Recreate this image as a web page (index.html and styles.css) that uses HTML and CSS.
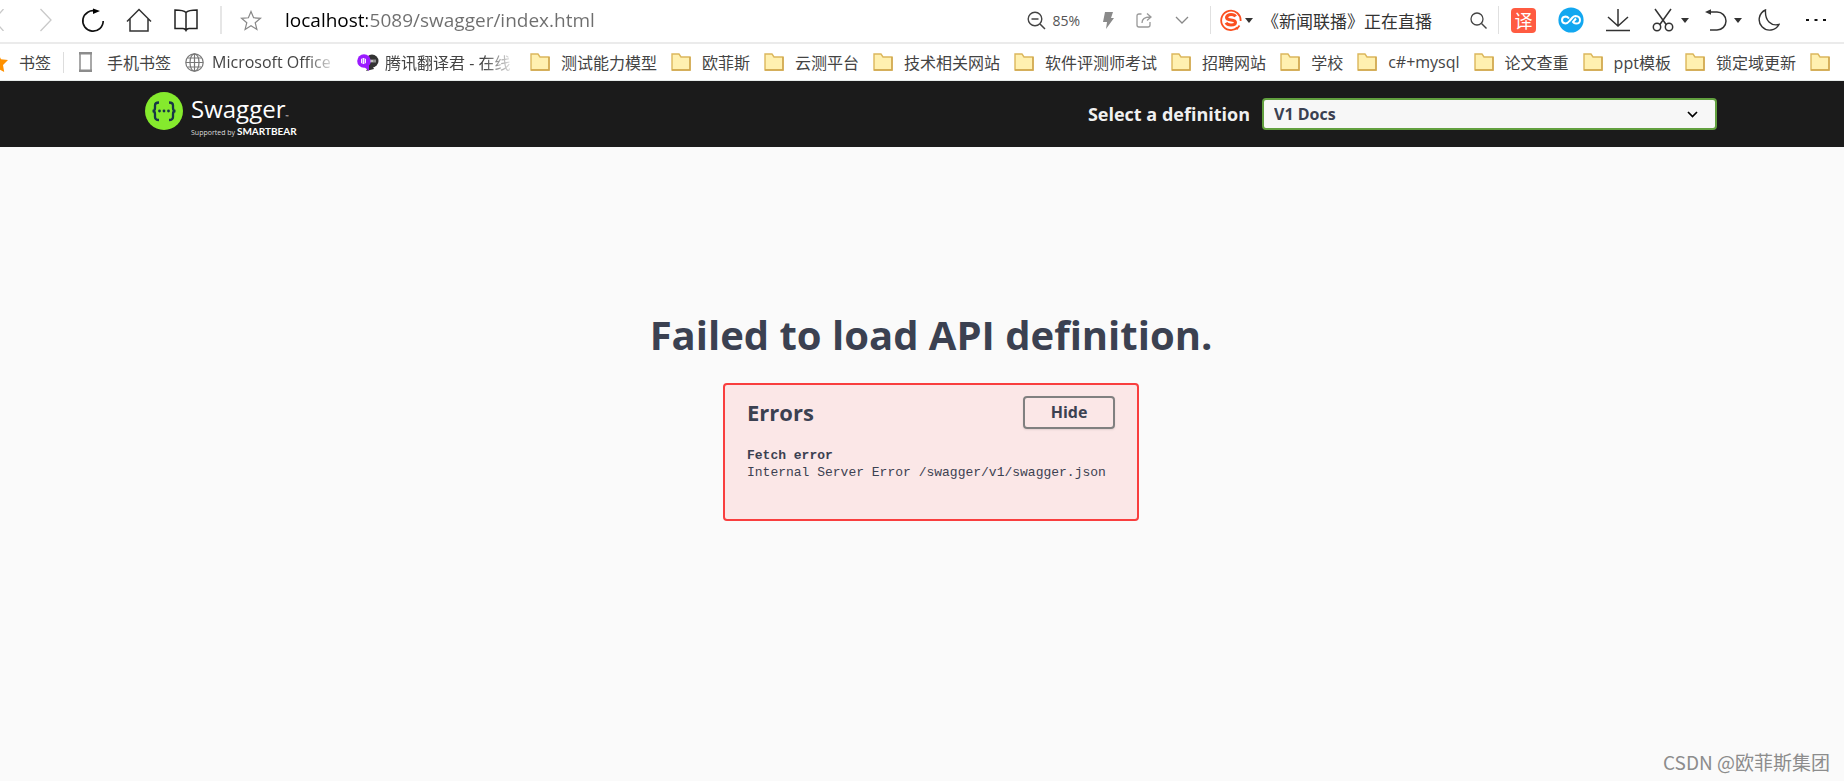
FILE: index.html
```html
<!DOCTYPE html>
<html lang="zh-CN">
<head>
<meta charset="utf-8">
<title>Swagger UI</title>
<link rel="stylesheet" href="styles.css">
</head>
<body>
<svg class="defs" aria-hidden="true">
  <symbol id="folder" viewBox="0 0 20 18"><path d="M1 1h7l2 3h9v13H1z" fill="#fff0b0" stroke="#dcb75c" stroke-width="1.4"/><path d="M19 4v13H1" fill="none" stroke="#cfa64e" stroke-width="1.4"/></symbol>
  <symbol id="caret" viewBox="0 0 8 5"><path d="M0 0h8L4 5z" fill="#333"/></symbol>
</svg>
<nav class="toolbar">
  <div class="nav-buttons">
    <button class="icon-btn back" aria-label="后退"><svg width="10" height="22" viewBox="0 0 10 22"><path d="M9.500 0 0 11l9.500 11" fill="none" stroke="#c9c9c9" stroke-width="1.300"/></svg></button>
    <button class="icon-btn forward" aria-label="前进"><svg width="12" height="24" viewBox="0 0 12 24"><path d="m.5 1 10.500 11L.5 23" fill="none" stroke="#c9c9c9" stroke-width="1.300"/></svg></button>
    <button class="icon-btn refresh" aria-label="刷新"><svg width="24" height="25" viewBox="0 0 24 25"><path d="M15 3.200A10.200 10.200 0 1 0 22.200 13" fill="none" stroke="#111" stroke-width="1.700"/><path d="m12 .5 7 2.500-7 3z" fill="#000"/></svg></button>
    <button class="icon-btn home" aria-label="主页"><svg width="26" height="24" viewBox="0 0 26 24"><path d="m1 13.500 12-12 12 12M4 11v12h18V11" fill="none" stroke="#333" stroke-width="1.500"/></svg></button>
    <button class="icon-btn book" aria-label="阅读"><svg width="24" height="23" viewBox="0 0 24 23"><path d="M12 3.500C10 1.500 7 1 1 1v18.500h8q2 0 3 2 1-2 3-2h8V1c-6 0-9 .5-11 2.500v17" fill="none" stroke="#222" stroke-width="1.500"/></svg></button>
    <span class="divider"></span>
    <button class="icon-btn favorite" aria-label="收藏"><svg width="22" height="21" viewBox="0 0 22 21"><path d="m11 1.500 2.600 6.300 6.900.5-5.300 4.400 1.700 6.700-5.900-3.700-5.900 3.700 1.700-6.700L1.500 8.300l6.900-.5z" fill="none" stroke="#888" stroke-width="1.200"/></svg></button>
  </div>
  <input class="address" aria-label="地址" value="localhost:5089/swagger/index.html">
  <div class="page-tools">
    <button class="icon-btn zoom"><svg width="19" height="19" viewBox="0 0 19 19"><circle cx="8" cy="8" r="6.800" fill="none" stroke="#444" stroke-width="1.400"/><path d="M4.500 8h7M13 13l5 5" stroke="#444" stroke-width="1.500"/></svg><span>85%</span></button>
    <button class="icon-btn" aria-label="加速"><svg width="12" height="17" viewBox="0 0 12 17"><path d="M3 0h8L9 6h3L4 17l1-7H1z" fill="#8a8a8a"/></svg></button>
    <button class="icon-btn" aria-label="分享"><svg width="17" height="16" viewBox="0 0 17 16"><path d="M5.500 2H3Q1 2 1 4v9q0 2 2 2h9q2 0 2-2v-3M6 11q0-6 8-6M11 1.500 15 5l-4 3.500" fill="none" stroke="#999" stroke-width="1.300"/></svg></button>
    <button class="icon-btn" aria-label="展开"><svg width="14" height="8" viewBox="0 0 14 8"><path d="m1 1 6 6 6-6" fill="none" stroke="#888" stroke-width="1.300"/></svg></button>
  </div>
  <form class="search">
    <button type="button" class="icon-btn engine" aria-label="搜索引擎"><svg width="22" height="22" viewBox="0 0 22 22"><path d="M17.500 18.500A9.700 9.700 0 1 1 20.600 12M16.500 20.500l3-4" fill="none" stroke="#fb5021" stroke-width="1.800"/><path d="M15.500 7.500Q14.500 5.500 11 5.500T6.500 8.200Q6.500 10.500 11 10.900t4.500 2.600Q15.500 16 11 16q-3.800 0-5-2.200" fill="none" stroke="#fb5021" stroke-width="3"/></svg><svg width="8" height="5"><use href="#caret"/></svg></button>
    <input class="query" aria-label="搜索" value="《新闻联播》正在直播">
    <button type="button" class="icon-btn" aria-label="搜索"><svg width="17" height="17" viewBox="0 0 17 17"><circle cx="7" cy="7" r="6" fill="none" stroke="#444" stroke-width="1.300"/><path d="m11.500 11.500 5 5" stroke="#444" stroke-width="1.400"/></svg></button>
  </form>
  <div class="extensions">
    <button class="icon-btn translate">译</button>
    <button class="icon-btn" aria-label="网盘"><svg width="26" height="26" viewBox="0 0 26 26"><circle cx="13" cy="13" r="12.600" fill="#12a7f0"/><path d="M11 11.500Q9.500 9.500 7.500 9.500 4 9.700 4 13t3.500 3.500q2 0 4-2.500l3-3.500q1.500-1.500 3-1.500 4.500.3 4.500 4t-4 3.500q-2 0-3-1.500l3-3.500" fill="none" stroke="#fff" stroke-width="2"/></svg></button>
    <button class="icon-btn" aria-label="下载"><svg width="24" height="23" viewBox="0 0 24 23"><path d="M12 0v17M2 8l10 9 10-9M0 21.500h24" fill="none" stroke="#333" stroke-width="1.500"/></svg></button>
    <button class="icon-btn with-caret" aria-label="截图"><svg width="22" height="24" viewBox="0 0 22 24"><path d="m3 1 11.500 16M19 1 7.500 17" stroke="#333" stroke-width="1.500"/><circle cx="5" cy="19" r="3.700" fill="none" stroke="#333" stroke-width="1.500"/><circle cx="17" cy="19" r="3.700" fill="none" stroke="#333" stroke-width="1.500"/></svg><svg width="8" height="5"><use href="#caret"/></svg></button>
    <button class="icon-btn with-caret" aria-label="恢复"><svg width="22" height="22" viewBox="0 0 22 22"><path d="M3 3h9a9 9 0 0 1 0 18H5" fill="none" stroke="#333" stroke-width="1.500"/><path d="m0 3 6-2.800v5.600z" fill="#333"/></svg><svg width="8" height="5"><use href="#caret"/></svg></button>
    <button class="icon-btn" aria-label="夜间模式"><svg width="22" height="22" viewBox="0 0 22 22"><path d="M7.500 1A10.500 10.500 0 1 0 21 15.500Q15 17 11 13T7.500 1z" fill="none" stroke="#333" stroke-width="1.400"/></svg></button>
    <button class="icon-btn more" aria-label="更多"><svg width="20" height="4" viewBox="0 0 20 4"><path d="M0 1h3v2H0zM8.500 1h3v2h-3zM17 1h3v2h-3z" fill="#111"/></svg></button>
  </div>
</nav>
<nav class="bookmarks">
  <a class="bookmark starred" href="#"><svg width="20" height="19" viewBox="0 0 20 19"><path d="m10 0 3 6.300 7 .7-5 5 1.200 7L10 15.500 3.800 19 5 12 0 7l7-.7z" fill="#ff9100"/></svg>书签</a>
  <span class="separator"></span>
  <a class="bookmark phone" href="#"><svg width="13" height="20" viewBox="0 0 13 20"><path d="M1 1h11v18H1z" fill="#fff" stroke="#8c8c8c" stroke-width="1.500"/><path d="M0 0h13v2.500H0zM0 17.500h13V20H0z" fill="#8c8c8c"/></svg>手机书签</a>
  <a class="bookmark office" href="#"><svg width="19" height="19" viewBox="0 0 19 19"><g fill="none" stroke="#777" stroke-width="1.200"><circle cx="9.500" cy="9.500" r="8.700"/><ellipse cx="9.500" cy="9.500" rx="4.500" ry="8.700"/><path d="M9.500 1v17M1 9.500h17M2.500 5h14M2.500 14h14"/></g></svg><span class="fade">Microsoft Office</span></a>
  <a class="bookmark tencent" href="#"><svg width="22" height="17" viewBox="0 0 22 17"><circle cx="15" cy="7" r="6.500" fill="#333"/><path d="m9 17 8-2-3-6z" fill="#333"/><circle cx="7" cy="7" r="6.800" fill="#9b1bff"/><path d="m6 12 6 5V9z" fill="#9b1bff"/><path d="M4.500 5h4v4h-4zM4 7h5M6.500 4v6M14 5.500v3m0-1.500h2m0-1.500v3m2-3v3" fill="none" stroke="#fff" stroke-width=".9"/></svg><span class="fade">腾讯翻译君 - 在线</span></a>
  <a class="bookmark" href="#"><svg width="20" height="18"><use href="#folder"/></svg>测试能力模型</a>
  <a class="bookmark" href="#"><svg width="20" height="18"><use href="#folder"/></svg>欧菲斯</a>
  <a class="bookmark" href="#"><svg width="20" height="18"><use href="#folder"/></svg>云测平台</a>
  <a class="bookmark" href="#"><svg width="20" height="18"><use href="#folder"/></svg>技术相关网站</a>
  <a class="bookmark" href="#"><svg width="20" height="18"><use href="#folder"/></svg>软件评测师考试</a>
  <a class="bookmark" href="#"><svg width="20" height="18"><use href="#folder"/></svg>招聘网站</a>
  <a class="bookmark" href="#"><svg width="20" height="18"><use href="#folder"/></svg>学校</a>
  <a class="bookmark" href="#"><svg width="20" height="18"><use href="#folder"/></svg>c#+mysql</a>
  <a class="bookmark" href="#"><svg width="20" height="18"><use href="#folder"/></svg>论文查重</a>
  <a class="bookmark" href="#"><svg width="20" height="18"><use href="#folder"/></svg>ppt模板</a>
  <a class="bookmark" href="#"><svg width="20" height="18"><use href="#folder"/></svg>锁定域更新</a>
  <a class="bookmark" href="#" aria-label="更多书签"><svg width="20" height="18"><use href="#folder"/></svg></a>
</nav>
<header class="topbar">
  <div class="wrapper">
    <a class="logo" href="#">
      <svg width="38" height="38" viewBox="0 0 38 38"><circle cx="19" cy="19" r="19" fill="#85ea2d"/><g fill="none" stroke="#173647" stroke-width="2.300"><path d="M14 10.500q-4 0-4 3v2.500q0 3-2.500 3 2.500 0 2.500 3V25q0 3 4 3M24 10.500q4 0 4 3v2.500q0 3 2.500 3-2.500 0-2.500 3V25q0 3-4 3"/></g><g fill="#173647"><circle cx="14.500" cy="19" r="1.400"/><circle cx="19" cy="19" r="1.400"/><circle cx="23.500" cy="19" r="1.400"/></g></svg>
      <span class="logo-text"><span class="brand">Swagger<small>™</small></span><span class="support">Supported by <b>SMARTBEAR</b></span></span>
    </a>
    <div class="definition">
      <label for="spec">Select a definition</label>
      <select id="spec"><option>V1 Docs</option></select>
    </div>
  </div>
</header>
<main class="content">
  <h1>Failed to load API definition.</h1>
  <section class="errors">
    <div class="errors-head"><h2>Errors</h2><button class="hide">Hide</button></div>
    <div class="error"><strong>Fetch error</strong><span>Internal Server Error /swagger/v1/swagger.json</span></div>
  </section>
</main>
<footer class="credit">CSDN @欧菲斯集团</footer>
</body>
</html>
```
FILE: styles.css
```css
* { box-sizing: border-box; }
body {
  margin: 0;
  min-height: 100vh;
  display: flex;
  flex-direction: column;
  overflow-x: hidden;
  background: #fafafa;
  color: #3b4151;
  font-family: "Open Sans", "Noto Sans CJK SC", sans-serif;
}
svg { display: block; flex: none; }
.defs { position: absolute; width: 0; height: 0; }
button, input, select { font-family: inherit; }
.icon-btn {
  display: flex;
  flex: none;
  align-items: center;
  padding: 0;
  border: 0;
  background: none;
  color: #555;
}
.toolbar {
  display: flex;
  align-items: center;
  height: 44px;
  padding: 0 18px 2px 0;
  border-bottom: 2px solid #ebebeb;
  background: #fff;
}
.nav-buttons { display: flex; align-items: center; flex: none; }
.back { margin-left: -6px; }
.forward { margin-left: 36px; }
.refresh { margin-left: 29px; }
.home { margin-left: 21px; }
.book { margin-left: 22px; }
.favorite { margin-left: 18px; }
.divider { width: 2px; height: 28px; margin-left: 22px; background: #e6e6e6; }
.address {
  flex: 1;
  min-width: 0;
  margin-left: 23px;
  padding: 0;
  border: 0;
  font-size: 19px;
  color: transparent;
  background: linear-gradient(90deg, #000 82px, #6e6e6e 82px) text;
}
.page-tools { display: flex; align-items: center; gap: 22px; padding-right: 21px; }
.zoom { gap: 6px; font-size: 14px; }
.search {
  display: flex;
  align-items: center;
  height: 28px;
  padding: 0 11px 0 9px;
  border: 1px solid #e0e0e0;
  border-width: 0 1px;
}
.engine { gap: 3px; }
.query { width: 217px; padding: 0 0 0 9px; border: 0; background: none; color: #333; font-size: 17px; }
.extensions { display: flex; align-items: center; gap: 22px; padding-left: 12px; }
.translate {
  justify-content: center;
  width: 25px;
  height: 25px;
  border-radius: 4px;
  background: #ff5b41;
  color: #fff;
  font-size: 18px;
}
.with-caret { gap: 7px; margin-right: -6px; }
.more { margin-left: 4px; }
.bookmarks {
  display: flex;
  align-items: center;
  gap: 14px;
  height: 37px;
  overflow: hidden;
  border-bottom: 1px solid #e8eceb;
  background: #fff;
}
.bookmark {
  display: flex;
  flex: none;
  align-items: center;
  gap: 11px;
  color: #444;
  font-size: 16px;
  white-space: nowrap;
  text-decoration: none;
}
.starred { margin-left: -12px; }
.separator { width: 1px; height: 21px; margin: 0 1px 0 -2px; background: #ddd; }
.phone { gap: 15px; }
.office { gap: 8px; }
.tencent { gap: 6px; margin-left: 6px; }
.fade {
  width: 125px;
  overflow: hidden;
  mask-image: linear-gradient(90deg, #000 75%, transparent);
}
.tencent .fade { width: 131px; }
.topbar { padding: 0 127px 0 145px; background: #1b1b1b; }
.wrapper { display: flex; align-items: center; justify-content: space-between; height: 66px; }
.logo { display: flex; align-items: center; gap: 8px; color: #fff; text-decoration: none; }
.logo > svg { margin-bottom: 6px; }
.logo-text { display: flex; flex-direction: column; padding-top: 4px; }
.brand { margin-bottom: -6px; font-size: 24px; line-height: 30px; font-weight: 400; }
.brand small { font-size: 4px; }
.support { font-size: 7px; line-height: 10px; color: #ddd; }
.support b { font-family: Lato, sans-serif; font-size: 10px; color: #fff; }
.definition { display: flex; align-items: center; gap: 12px; }
.definition label { color: #f0f0f0; font-size: 18px; font-weight: 700; }
.definition select {
  width: 455px;
  height: 32px;
  padding: 0 10px;
  border: 2px solid #62a03f;
  border-radius: 4px;
  appearance: none;
  background: #f7f7f7 url("data:image/svg+xml,%3Csvg xmlns='http://www.w3.org/2000/svg' viewBox='0 0 11 7'%3E%3Cpath d='m1 1 4.500 4.500L10 1' fill='none' stroke='%23000' stroke-width='1.700'/%3E%3C/svg%3E") no-repeat right 17px center / 11px 7px;
  color: #3b4151;
  font-size: 16px;
  font-weight: 700;
}
.content {
  display: flex;
  flex-direction: column;
  align-items: center;
  padding: 158px 0 0 18px;
}
h1 { margin: 0 0 19px; font-size: 40px; line-height: 59px; font-weight: 700; }
.errors {
  min-width: 416px;
  min-height: 138px;
  padding: 11px 22px;
  border: 2px solid #f93e3e;
  border-radius: 4px;
  background: #fbe7e7;
}
.errors-head { display: flex; align-items: center; justify-content: space-between; }
h2 { margin: 0; padding-bottom: 2px; font-size: 22px; line-height: 30px; font-weight: 700; }
.hide {
  width: 92px;
  height: 33px;
  padding: 0 0 2px;
  border: 2px solid #808080;
  border-radius: 4px;
  background: transparent;
  box-shadow: 0 1px 2px rgba(0, 0, 0, .1);
  color: #3b4151;
  font-size: 16px;
  font-weight: 700;
}
.error {
  display: flex;
  flex-direction: column;
  padding-top: 18px;
  font-family: "Liberation Mono", monospace;
  font-size: 13px;
  line-height: 17px;
}
.credit {
  margin-top: auto;
  padding: 0 14px 4px 0;
  color: #8c8c8c;
  font-family: "Noto Sans CJK SC", sans-serif;
  font-size: 19px;
  line-height: 30px;
  text-align: right;
}
```
